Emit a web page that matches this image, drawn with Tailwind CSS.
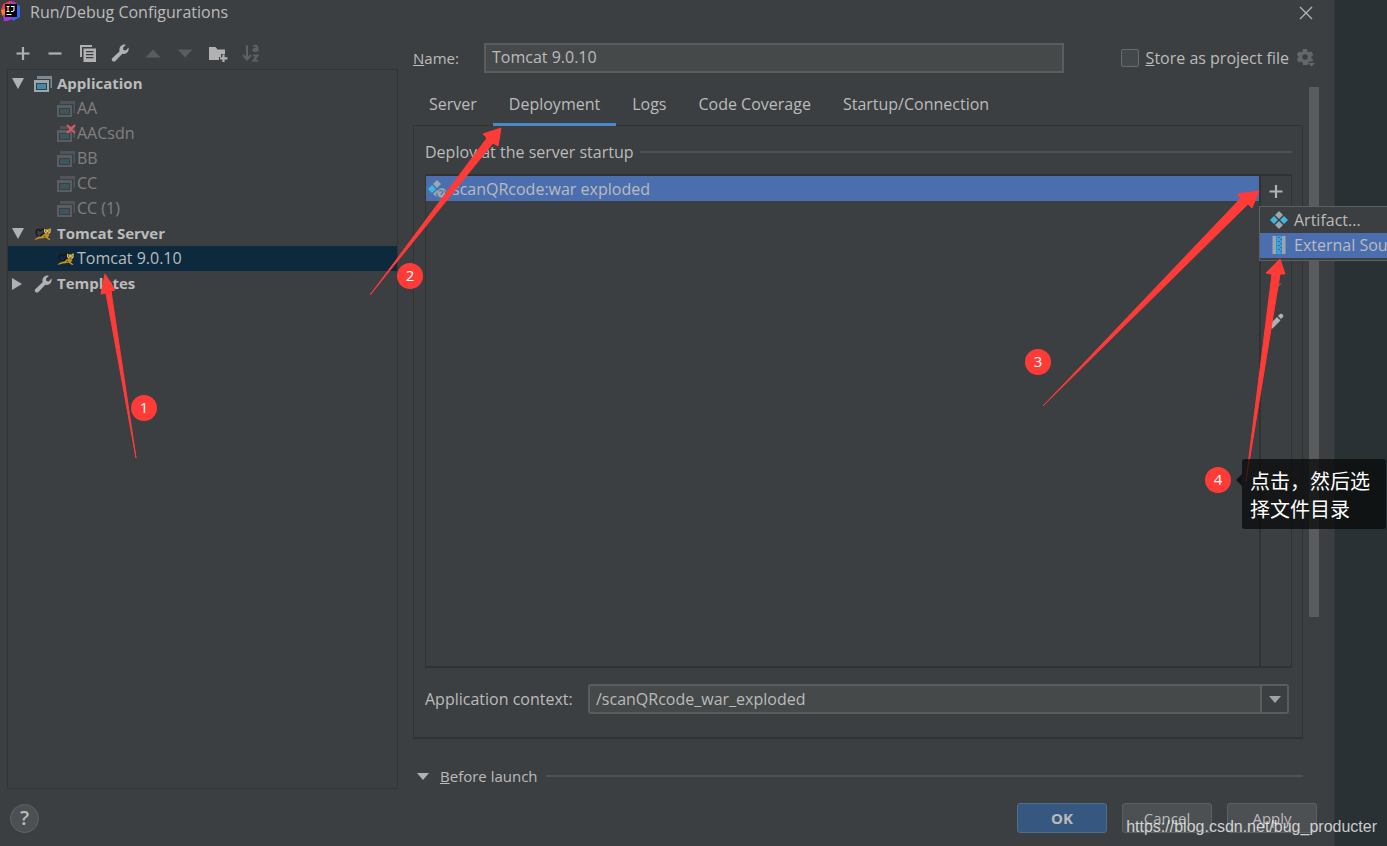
<!DOCTYPE html>
<html lang="en">
<head>
<meta charset="utf-8">
<title>Run/Debug Configurations</title>
<script src="https://cdn.jsdelivr.net/npm/@tailwindcss/browser@4"></script>
</head>
<body class="bg-[#293134]">
<svg class="hidden" aria-hidden="true">
  <symbol id="app" viewBox="0 0 18 18"><path d="M3 1h15v12h-1.500V4H3z" fill="#7b8a93"/><path fill-rule="evenodd" d="M0 5h15v12H0zM2 8v7h11V8z" fill="#9aa7b0"/><path d="M3 9h9v5H3z" fill="#3d8ba6"/></symbol>
  <symbol id="wrench" viewBox="0 0 18 18"><path d="M1.200 14.300 8.600 7.200C7.900 4.600 9 2 11.400 1c1.100-.5 2.300-.5 3.400-.2L12 3.700l.4 2.300 2.300.4 2.800-2.800c.4 1.500.2 3.200-.8 4.500-1.300 1.700-3.500 2.300-5.400 1.700l-7.100 7.400c-2 1.400-4.500-1-3-2.900z" fill="#afb1b3"/></symbol>
  <symbol id="tomcat" viewBox="0 0 18 14"><path d="M4 9C1 7 2 3 4 2.500s3 1 1.500 2M7 3.500c1-1.500 2-1 3.500-1.500l-.5 4-4 3" fill="none" stroke="#191919" stroke-width="1.500"/><path d="m0 12.500 4.500-2.500 3-.5L10 7l4 .5 1.500 1L13.500 10l3 2.500-1.500.5-3.500-2.500-3 .8-3 .2-3 1z" fill="#c9941f"/><path d="m10 1.500 1.500 1h3L16.500 1l.3 4-2 2.500-3-.5L10 5z" fill="#e3bf5a"/><path d="M11 3.500h1.200v1H11zM14.500 3.500h1.200v1h-1.200zM12.500 5.500h2v1h-2zM9 9.500l2-1 .5 1z" fill="#2b1c05"/></symbol>
  <symbol id="artifact" viewBox="0 0 18 18"><path d="m9 0 4 4-4 4-4-4zM9 10l4 4-4 4-4-4z" fill="#9aa7b0"/><path d="m4 5 4 4-4 4-4-4zM14 5l4 4-4 4-4-4z" fill="#40b6e0"/></symbol>
</svg>
<div class="relative flex min-h-screen w-full overflow-hidden font-['Open_Sans','Noto_Sans','Noto_Sans_CJK_SC',sans-serif] text-base leading-5 text-[#bbbbbb]">
  <main class="flex flex-1 flex-col border-r border-[#34383a] bg-[#3c3f41]">
    <header class="flex h-[25px] items-center">
      <svg class="mb-1 ml-px h-5 w-5" viewBox="0 0 20 20"><path d="M2 3 9 0l5 2-5 8-8 3-1-4z" fill="#f9344f"/><path d="m0 9 4-1v8l-3-2z" fill="#fb7a24"/><path d="m2 14 8-2 2 6-9 3z" fill="#a536d8"/><path d="m13 1 6 4v11l-7 4-3-8z" fill="#3666ee"/><path d="m9 0 5 1 1 3H8z" fill="#b53bb5"/><path d="M4 3h12v13H4z" fill="#070707"/><path d="M5.500 5h3v1h-1v4h1v1h-3v-1h1V6h-1zM10 5h3.500v4.500L12 11h-2v-1h1.500l1-1V6H10zM5.500 13h5v1h-5z" fill="#fff"/></svg>
      <h1 class="ml-[9px] flex-1 pb-[2px]">Run/Debug Configurations</h1>
      <button aria-label="Close" class="mr-[21px]"><svg class="h-[14px] w-[14px]" viewBox="0 0 14 14"><path d="m1 1 12 12M13 1 1 13" stroke="#b4b6b7" stroke-width="1.300"/></svg></button>
    </header>

    <div class="flex flex-1">
      <aside class="ml-[7px] flex w-[391px] flex-col">
        <div class="flex h-11 items-center justify-between pt-3 pr-[138px] pl-[7px]">
          <button aria-label="Add"><svg class="h-[18px] w-[18px]" viewBox="0 0 18 18"><path d="M9 3v13M2.500 9.500h13" stroke="#afb1b3" stroke-width="2.200"/></svg></button>
          <button aria-label="Remove"><svg class="h-[18px] w-[18px]" viewBox="0 0 18 18"><path d="M2.500 9.500h13" stroke="#afb1b3" stroke-width="2.200"/></svg></button>
          <button aria-label="Copy"><svg class="h-[18px] w-[18px]" viewBox="0 0 18 18"><path d="M1 13V1h12v2H3v10z" fill="#afb1b3"/><path fill-rule="evenodd" d="M4.500 4.500H17V18H4.500zM7 7v1.300h7.500V7zm0 3v1.300h7.500V10zm0 3v1.300h7.500V13z" fill="#afb1b3"/></svg></button>
          <button aria-label="Edit templates"><svg class="h-[18px] w-[18px]"><use href="#wrench"/></svg></button>
          <button aria-label="Move up"><svg class="h-[18px] w-[18px]" viewBox="0 0 18 18"><path d="m1.500 13.500 7.500-8 7.500 8z" fill="#5a5d5f"/></svg></button>
          <button aria-label="Move down"><svg class="h-[18px] w-[18px]" viewBox="0 0 18 18"><path d="m1.500 5.500 7.500 8 7.500-8z" fill="#5a5d5f"/></svg></button>
          <button aria-label="New folder"><svg class="h-[18px] w-[19px]" viewBox="0 0 19 18"><path d="M0 3h6.500l2 2.500H16V10h-4v3h-2v3H0z" fill="#afb1b3"/><path d="M14.500 10.500V18M11 14.300h7.500" stroke="#afb1b3" stroke-width="2.200"/></svg></button>
          <button aria-label="Sort"><svg class="h-[18px] w-[18px]" viewBox="0 0 18 18"><g fill="none" stroke="#5f6264" stroke-width="2"><path d="M5 1.500V15M1 11l4 4.500L9 11M11.500 2.500c1-1 4-1 4 .5v4M15.500 4.500c-5-.5-5 2.500-2.500 2.500 1 0 2.500-.5 2.500-1.500M11 11.500h4.500l-4 5H16"/></g></svg></button>
        </div>
        <ul class="flex-1 border border-[#323436] pt-px [&_b]:pb-[2px] [&_b]:text-[15px] [&_span]:pb-[2px]">
          <li class="flex h-[25px] items-center"><svg class="ml-1 h-[11px] w-3" viewBox="0 0 12 11"><path d="M0 0h12L6 11z" fill="#afb1b3"/></svg><svg class="ml-[10px] h-[18px] w-[18px]"><use href="#app"/></svg><b class="ml-[5px]">Application</b></li>
          <li class="flex h-[25px] items-center pl-[49px] text-[#808080]"><svg class="h-[18px] w-[18px] opacity-30"><use href="#app"/></svg><span class="ml-[2px]">AA</span></li>
          <li class="relative flex h-[25px] items-center pl-[49px] text-[#808080]"><svg class="h-[18px] w-[18px] opacity-30"><use href="#app"/></svg><svg class="absolute top-[3px] left-[58px] h-[10px] w-[10px]" viewBox="0 0 10 10"><path d="m1 1 8 8M9 1 1 9" stroke="#db5860" stroke-width="2"/></svg><span class="ml-[2px]">AACsdn</span></li>
          <li class="flex h-[25px] items-center pl-[49px] text-[#808080]"><svg class="h-[18px] w-[18px] opacity-30"><use href="#app"/></svg><span class="ml-[2px]">BB</span></li>
          <li class="flex h-[25px] items-center pl-[49px] text-[#808080]"><svg class="h-[18px] w-[18px] opacity-30"><use href="#app"/></svg><span class="ml-[2px]">CC</span></li>
          <li class="flex h-[25px] items-center pl-[49px] text-[#808080]"><svg class="h-[18px] w-[18px] opacity-30"><use href="#app"/></svg><span class="ml-[2px]">CC (1)</span></li>
          <li class="flex h-[25px] items-center"><svg class="ml-1 h-[11px] w-3" viewBox="0 0 12 11"><path d="M0 0h12L6 11z" fill="#afb1b3"/></svg><svg class="ml-[10px] h-[14px] w-[18px]"><use href="#tomcat"/></svg><b class="ml-[5px]">Tomcat Server</b></li>
          <li class="flex h-[25px] items-center bg-[#0d293e] pl-[49px]"><svg class="h-[14px] w-[18px]"><use href="#tomcat"/></svg><span class="ml-[2px]">Tomcat 9.0.10</span></li>
          <li class="flex h-[25px] items-center"><svg class="ml-1 h-3 w-[10px]" viewBox="0 0 10 12"><path d="M0 0v12l10-6z" fill="#afb1b3"/></svg><svg class="ml-3 h-[18px] w-[18px]"><use href="#wrench"/></svg><b class="ml-[5px]">Templates</b></li>
        </ul>
      </aside>

      <section class="mr-[15px] ml-[15px] flex flex-1 flex-col pt-[18px]">
        <div class="flex h-[30px] items-center pr-1">
          <label for="name" class="w-[71px] text-[15px]"><u>N</u>ame:</label>
          <input id="name" value="Tomcat 9.0.10" class="h-[30px] min-w-0 flex-1 border-2 border-[#5a5d5e] bg-[#45494a] px-[6px] pb-[2px]">
          <input id="store" type="checkbox" class="ml-[57px] h-[18px] w-[18px] appearance-none rounded-xs border border-[#6b6b6b] bg-[#43494a]">
          <label for="store" class="ml-[7px]"><u>S</u>tore as project file</label>
          <button aria-label="Storage settings" class="ml-2"><svg class="h-[18px] w-[18px]" viewBox="0 0 18 18"><path fill-rule="evenodd" d="M6 0h4l.5 2.500 1.500.8 2.300-.9 2 3.400-1.900 1.700v1.800l1.900 1.600-1 1.600H12l-1 1.500.2 1.500L10 16H6l-.5-2.500-1.500-.9-2.300.9-2-3.400L1.600 8.500V7.500L-.3 5.800l2-3.400 2.300.9 1.500-.8zM8 5.200a2.800 2.800 0 1 0 0 5.600 2.800 2.800 0 0 0 0-5.600z" fill="#64676a"/><path d="M11 14h7l-3.500 3.500z" fill="#64676a"/></svg></button>
        </div>
        <div class="mt-[14px] flex flex-1 gap-[6px]">
          <div class="flex flex-1 flex-col">
            <nav class="flex h-[38px]" role="tablist">
              <button role="tab" class="px-4 pb-1">Server</button>
              <button role="tab" aria-selected="true" class="relative px-4 pb-1">Deployment<span class="absolute inset-x-0 -bottom-px h-[3px] bg-[#4a88c7]"></span></button>
              <button role="tab" class="px-4 pb-1">Logs</button>
              <button role="tab" class="px-4 pb-1">Code Coverage</button>
              <button role="tab" class="px-4 pb-1">Startup/Connection</button>
            </nav>
            <div class="flex flex-1 flex-col border border-b-2 border-[#323232] px-[11px] pr-[10px] pt-4 pb-[23px]">
              <div class="flex items-center gap-[6px]"><h2>Deploy at the server startup</h2><hr class="flex-1 border-t-2 border-[#515151]"></div>
              <div class="mt-[12px] flex flex-1 border border-t-2 border-b-2 border-[#323232]">
                <div class="flex-1">
                  <div class="flex h-[25px] items-center bg-[#4b6eaf] pl-[2px]"><svg class="h-[18px] w-[19px]" viewBox="0 0 19 18"><path d="m9 0 4 4-4 4-4-4z" fill="#9aa7b0"/><path d="m4 5 4 4-4 4-4-4z" fill="#40b6e0"/><path d="m9 10 1 1-2 3 1 3-4-3z" fill="#9aa7b0"/><circle cx="14" cy="13" r="4.800" fill="#9aa7b0"/><path d="M11 11c2-1 4 0 4 1s-2 1-2 3m4-5c-1 1 1 3 1 4" fill="none" stroke="#4b6eaf" stroke-width="1.200"/></svg><span class="ml-[5px]">scanQRcode:war exploded</span></div>
                </div>
                <div class="flex w-[32px] flex-col items-center border-l-2 border-[#323232] pt-[6px]">
                  <button aria-label="Add deployment"><svg class="h-[18px] w-[18px]" viewBox="0 0 18 18"><path d="M9 3v13M2.500 9.500h13" stroke="#afb1b3" stroke-width="2.200"/></svg></button>
                  <button aria-label="Move deployment down" class="mt-[78px]"><svg class="h-[18px] w-[18px]" viewBox="0 0 18 18"><path d="m3 5 6 7 6-7z" fill="#5a5d5f"/></svg></button>
                  <button aria-label="Edit deployment" class="mt-[16px]"><svg class="h-[18px] w-[18px]" viewBox="0 0 18 18"><path d="m2 13 8-8 3.500 3.500-8 8H2zM11 4l2-2c2-1 4 1 3 3l-2 2z" fill="#afb1b3"/></svg></button>
                </div>
              </div>
              <div class="mt-4 flex h-[30px] items-center">
                <label for="ctx" class="w-[163px]">Application context:</label>
                <div class="mr-[3px] flex h-[30px] flex-1 overflow-hidden rounded-[3px] border-2 border-[#5a5d5e] bg-[#45494a]">
                  <input id="ctx" value="/scanQRcode_war_exploded" class="min-w-0 flex-1 pb-px pl-[6px]">
                  <button aria-label="Show contexts" class="flex w-[27px] items-center justify-center border-l-2 border-[#5a5d5e] bg-[#3c3f41]"><svg class="h-[7px] w-3" viewBox="0 0 12 7"><path d="M0 0h12L6 7z" fill="#9fa2a5"/></svg></button>
                </div>
              </div>
            </div>
            <div class="flex h-[50px] items-center pt-[25px] pb-px pl-1"><svg class="h-[7px] w-3" viewBox="0 0 12 7"><path d="M0 0h12L6 7z" fill="#afb1b3"/></svg><h2 class="ml-[11px] text-[15px]"><u>B</u>efore launch</h2><hr class="ml-[8px] flex-1 border-t-2 border-[#515151]"></div>
          </div>
          <div class="h-[530px] w-[10px] bg-[#5a5b5d]"></div>
        </div>
      </section>
    </div>

    <footer class="flex h-[57px] items-center gap-[15px] pt-px pr-[17px] pl-[10px] text-[15px]">
      <button aria-label="Help" class="mr-auto h-[29px] w-[29px] rounded-full border border-[#616466] bg-[#4c5052] text-xl leading-6 font-semibold">?</button>
      <button class="h-[30px] w-[90px] rounded-[3px] border border-[#4c708c] bg-[#365880] font-bold">OK</button>
      <button class="h-[30px] w-[90px] rounded-[3px] border border-[#5e6060] bg-[#4c5052]">Cancel</button>
      <button class="h-[30px] w-[90px] rounded-[3px] border border-[#5e6060] bg-[#4c5052]">Apply</button>
    </footer>
  </main>
  <div class="w-[52px] bg-[#293134]"></div>

  <!-- Add-deployment menu, running past the window edge -->
  <div role="menu" class="absolute top-[206px] -right-[72px] w-[200px] border border-[#5d5f61] bg-[#3c3f41] pt-px pb-[2px]">
    <button role="menuitem" class="flex h-[25px] w-full items-center pb-[2px] pl-[10px]"><svg class="h-[18px] w-[18px]"><use href="#artifact"/></svg><span class="ml-[6px]">Artifact...</span></button>
    <button role="menuitem" class="flex h-[25px] w-full items-center bg-[#4b6eaf] pb-[2px] pl-[10px]"><svg class="h-[18px] w-[18px]" viewBox="0 0 18 18"><path d="M2.500 0H6v18H2.500zM12 0h3.500v18H12z" fill="#9aa7b0"/><path d="M6.500 0h5v18h-5z" fill="#3ba3d8"/><path d="M8 1.500h2m0 2h1.500M8 5.500h2m0 2h1.500M8 9.500h2m0 2h1.500M8 13.500h2m0 2h1.500" stroke="#2f6fa3" stroke-width="1.200"/></svg><span class="ml-[6px] whitespace-nowrap">External Source...</span></button>
  </div>

  <!-- Step arrows -->
  <svg class="pointer-events-none absolute top-0 left-0 h-[846px] w-[1387px]" viewBox="0 0 1387 846" fill="#ff3b38" stroke="#ff3b38" stroke-linejoin="round">
    <path d="m105 274 10 16-4 1 25 167-30-165-5 1z"/>
    <path d="m501 128-3 18-5-3-123 152L487 138l-4-4z"/>
    <path d="m1259 191-7 17-4-4-205 202 198-208-4-4z"/>
    <path d="m1280 259 5 15h-5l-34 207 26-207h-1l-5-1z"/>
  </svg>
  <span class="absolute top-[395px] left-[131px] h-[26px] w-[26px] rounded-full bg-[#ff3b38] text-center text-[15px] leading-6 text-white">1</span>
  <span class="absolute top-[263px] left-[397px] h-[26px] w-[26px] rounded-full bg-[#ff3b38] text-center text-[15px] leading-6 text-white">2</span>
  <span class="absolute top-[349px] left-[1025px] h-[26px] w-[26px] rounded-full bg-[#ff3b38] text-center text-[15px] leading-6 text-white">3</span>
  <span class="absolute top-[467px] left-[1205px] h-[26px] w-[26px] rounded-full bg-[#ff3b38] text-center text-[15px] leading-6 text-white">4</span>
  <svg class="absolute top-[474px] left-[1236px] h-3 w-[6px]" viewBox="0 0 6 12"><path d="M6 0v12L0 6z" fill="#121314"/></svg>
  <p lang="zh-CN" class="absolute top-[459px] left-[1242px] w-[144px] rounded-[3px] bg-[#080909]/75 pt-2 pb-[6px] pl-2 font-['Noto_Sans_CJK_SC',sans-serif] text-xl leading-7 text-white">点击，然后选<br>择文件目录</p>
  <a href="https://blog.csdn.net/bug_producter" class="absolute right-[10px] bottom-[8px] font-['Liberation_Sans',sans-serif] text-base leading-[22px] text-white/75">https://blog.csdn.net/bug_producter</a>
</div>
</body>
</html>
